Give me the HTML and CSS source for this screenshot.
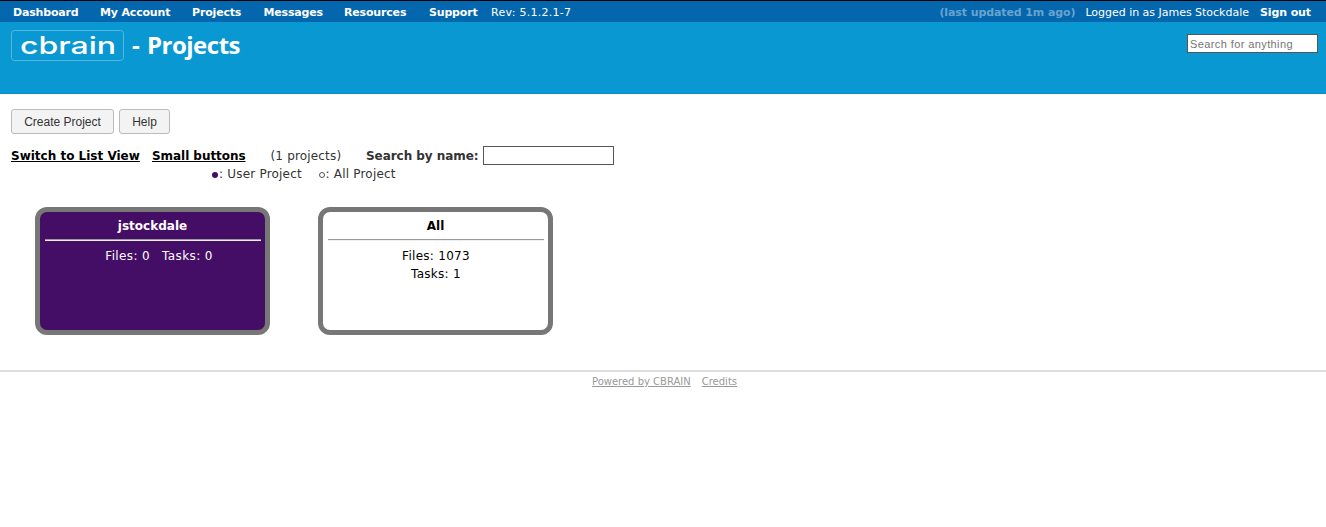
FILE: index.html
```html
<!DOCTYPE html>
<html lang="en">
<head>
<meta charset="utf-8">
<title>CBRAIN - Projects</title>
<link rel="stylesheet" href="styles.css">
</head>
<body>
<nav class="menu">
  <a class="m-dashboard">Dashboard</a><a class="m-account">My Account</a><a class="m-projects">Projects</a><a class="m-messages">Messages</a><a class="m-resources">Resources</a><a class="m-support">Support</a><span class="rev">Rev: 5.1.2.1-7</span>
  <div class="session"><b class="updated">(last updated 1m ago)</b><span class="user">Logged in as James Stockdale</span><a>Sign out</a></div>
</nav>
<header class="banner">
  <svg class="logo" width="113" height="31" viewBox="0 0 113 31" role="img" aria-label="cbrain">
    <rect x=".5" y=".5" width="112" height="30" rx="3"/>
    <text x="9" y="24" textLength="96" lengthAdjust="spacingAndGlyphs">cbrain</text>
  </svg>
  <h1 class="title">- Projects</h1>
  <input class="field search" placeholder="Search for anything">
</header>
<main class="content">
  <div class="actions"><button class="button create">Create Project</button><button class="button help">Help</button></div>
  <div class="toolbar">
    <a class="link t-list">Switch to List View</a><a class="link t-small">Small buttons</a><span class="t-count">(1 projects)</span><b class="t-name">Search by name:</b><input class="field name">
  </div>
  <div class="legend"><span class="l-user"><i class="dot"></i>: User Project</span><span class="l-all"><i class="dot open"></i>: All Project</span></div>
  <div class="cards">
    <section class="card personal"><h2>jstockdale</h2><hr><p class="stats"><span>Files: 0</span><span>Tasks: 0</span></p></section>
    <section class="card"><h2>All</h2><hr><p>Files: 1073<br>Tasks: 1</p></section>
  </div>
</main>
<footer class="footer"><a>Powered by CBRAIN</a><a>Credits</a></footer>
</body>
</html>
```
FILE: styles.css
```css
* { box-sizing: border-box; }
body { margin: 0; background: #fff; color: #333; font: 12px/18px Verdana, "DejaVu Sans", sans-serif; }
a { color: inherit; }
.menu { display: flex; height: 22px; padding: 3px 15px 0 13px; border-top: 1px solid #000; background: #0466ad; color: #fff; font-size: 11px; white-space: nowrap; }
.menu a, .menu b { font-weight: bold; letter-spacing: -.17px; }
.m-dashboard { width: 87px; }
.m-account { width: 92px; }
.m-projects { width: 71.5px; }
.m-messages { width: 80.5px; }
.m-resources { width: 85px; }
.m-support { width: 62px; }
.rev { letter-spacing: .28px; }
.session { display: flex; margin-left: auto; }
.menu .updated { width: 146px; color: #68a3ce; letter-spacing: -.1px; }
.menu .session a { letter-spacing: -.1px; }
.user { width: 174.5px; letter-spacing: -.02px; }
.banner { display: flex; align-items: flex-start; height: 72px; padding: 8px 8px 0 11px; background: #0a98d2; border-bottom: 1px solid #0a8fc6; color: #fff; }
.logo rect { fill: none; stroke: #54b7e0; }
.logo text { fill: #fff; font: 500 24px Inter, sans-serif; }
.title { margin: -1px 0 0 8px; font: bold 24px/31px "Open Sans", sans-serif; letter-spacing: -.5px; word-spacing: 2px; }
.field { height: 19px; width: 131px; padding: 1px 2px; border: 1px solid #555; background: #fff; font: 11px/15px "Liberation Sans", Arial, sans-serif; }
.search { margin: 4px 0 0 auto; letter-spacing: .4px; }
.field::placeholder { color: #757575; opacity: 1; }
.content { height: 276px; padding: 15px 11px 0; }
.actions { display: flex; gap: 5px; }
.button { height: 25px; padding: 0; border: 1px solid #bbb; border-radius: 3px; background: #f3f3f3; color: #333; font: 12px "Liberation Sans", Arial, sans-serif; }
.create { width: 103px; }
.help { width: 51px; }
.toolbar { display: flex; align-items: center; height: 19px; margin-top: 12px; white-space: nowrap; }
.link { color: #000; font-weight: bold; text-decoration: underline; text-decoration-thickness: 1px; }
.t-list { width: 141px; }
.t-small { width: 118.5px; letter-spacing: -.05px; }
.t-count { width: 95.5px; letter-spacing: .17px; }
.t-name { width: 117px; letter-spacing: -.05px; }
.legend { display: flex; padding-left: 200px; white-space: nowrap; letter-spacing: .2px; }
.l-user { width: 107.5px; }
.dot { display: inline-block; width: 6px; height: 6px; margin: 0 1px; border-radius: 50%; background: #440d66; }
.dot.open { margin: 0 1px 0 0; border: 1px solid #555; background: none; }
.cards { display: flex; gap: 48px; padding: 24px 24px 0; }
.card { width: 235px; height: 128px; padding: 5px 4px 5px 5px; border: 5px solid #777; border-radius: 12px; color: #000; text-align: center; }
.personal { background: #440d66; color: #fff; }
.card h2 { margin: 0; padding-right: 1px; font-size: 12px; line-height: 18px; }
.card hr { height: 2px; margin: 4px 0 6px; border: 0; border-top: 1px solid #999; border-bottom: 1px solid #eee; }
.card p { margin: 0; letter-spacing: .28px; }
.card .stats { display: flex; justify-content: center; gap: 12px; padding-left: 12px; letter-spacing: .38px; }
.footer { display: flex; justify-content: center; gap: 11px; padding: 1px 0 0 3px; border-top: 2px solid #ddd; color: #999; font-size: 10px; }
.footer a { text-decoration: underline; }
```
